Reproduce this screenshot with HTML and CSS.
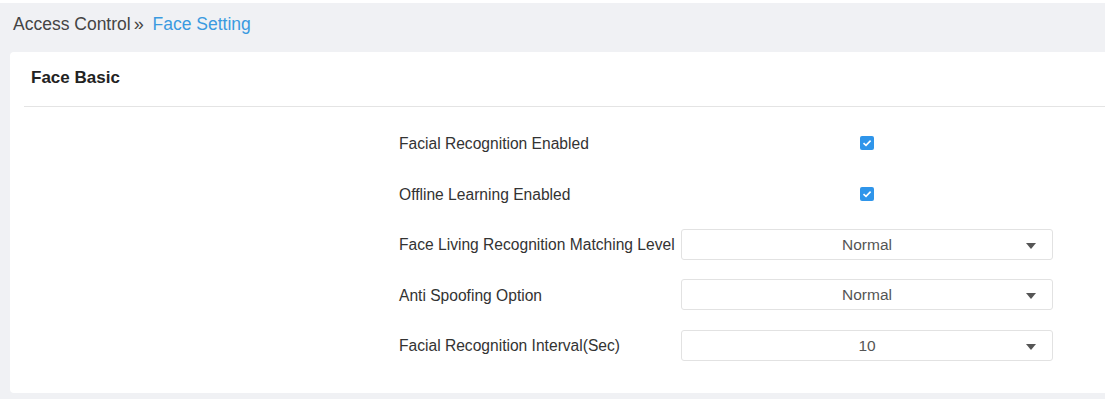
FILE: index.html
```html
<!DOCTYPE html>
<html lang="en">
<head>
    <meta charset="UTF-8">
    <title>Face Setting</title>
    <link rel="stylesheet" href="styles.css">
</head>
<body>
    <div class="page">
        <div class="breadcrumb">
            <span>Access Control</span><span class="sep">»</span>
            <a href="#">Face Setting</a>
        </div>

        <div class="card">
            <div class="card-title">Face Basic</div>
            <div class="form">
                <div class="form-row">
                    <label>Facial Recognition Enabled</label>
                    <div class="control"><span class="check"><svg width="10" height="8" viewBox="0 0 10 8"><path d="M1.5 4.2 L4 6.4 L8.6 1.6" fill="none" stroke="#fff" stroke-width="1.6"/></svg></span></div>
                </div>
                <div class="form-row">
                    <label>Offline Learning Enabled</label>
                    <div class="control"><span class="check"><svg width="10" height="8" viewBox="0 0 10 8"><path d="M1.5 4.2 L4 6.4 L8.6 1.6" fill="none" stroke="#fff" stroke-width="1.6"/></svg></span></div>
                </div>
                <div class="form-row">
                    <label>Face Living Recognition Matching Level</label>
                    <div class="control"><div class="select">Normal<span class="arrow"></span></div></div>
                </div>
                <div class="form-row">
                    <label>Anti Spoofing Option</label>
                    <div class="control"><div class="select">Normal<span class="arrow"></span></div></div>
                </div>
                <div class="form-row">
                    <label>Facial Recognition Interval(Sec)</label>
                    <div class="control"><div class="select">10<span class="arrow"></span></div></div>
                </div>
            </div>
        </div>
    </div>
</body>
</html>
```

FILE: styles.css
```css
body {
    margin: 0;
    background-color: #fff;
    font-family: "Liberation Sans", Arial, sans-serif;
    font-size: 14px;
    color: #333;
}
.page {
    margin-top: 3px;
    width: 1105px;
    height: 396px;
    background-color: #f0f1f4;
    overflow: hidden;
}
.breadcrumb {
    padding: 12px 0 0 13px;
    height: 24px;
    line-height: 19px;
    font-size: 17.5px;
    color: #444;
}
.breadcrumb .sep {
    margin-left: 3px;
    font-size: 18px;
}
.breadcrumb a {
    color: #3a9ae0;
    text-decoration: none;
    margin-left: 4px;
}
.card {
    margin: 13px 0 0 10px;
    background-color: #fff;
    border-radius: 4px 0 0 4px;
    height: 341px;
}
.card-title {
    margin-left: 14px;
    padding: 0 0 0 7px;
    height: 54px;
    line-height: 52px;
    font-weight: bold;
    font-size: 17px;
    color: #222;
    border-bottom: 1px solid #e4e4e4;
}
.form {
    padding-top: 12px;
    padding-left: 389px;
}
.form-row {
    display: flex;
    align-items: center;
    height: 50.5px;
}
.form-row label {
    width: 282px;
    font-size: 15.6px;
    color: #333;
    white-space: nowrap;
}
.control {
    width: 372px;
    display: flex;
    justify-content: center;
}
.check {
    width: 14px;
    height: 14px;
    border-radius: 2px;
    background-color: #2f95ea;
    display: flex;
    align-items: center;
    justify-content: center;
    margin-top: -2px;
}
.select {
    position: relative;
    width: 370px;
    height: 29px;
    line-height: 29px;
    border: 1px solid #e2e2e2;
    border-radius: 3px;
    text-align: center;
    font-size: 15.5px;
    color: #555;
    margin-top: -2px;
}
.arrow {
    position: absolute;
    right: 16px;
    top: 13px;
    width: 0;
    height: 0;
    border-left: 5px solid transparent;
    border-right: 5px solid transparent;
    border-top: 6px solid #555;
}
```
